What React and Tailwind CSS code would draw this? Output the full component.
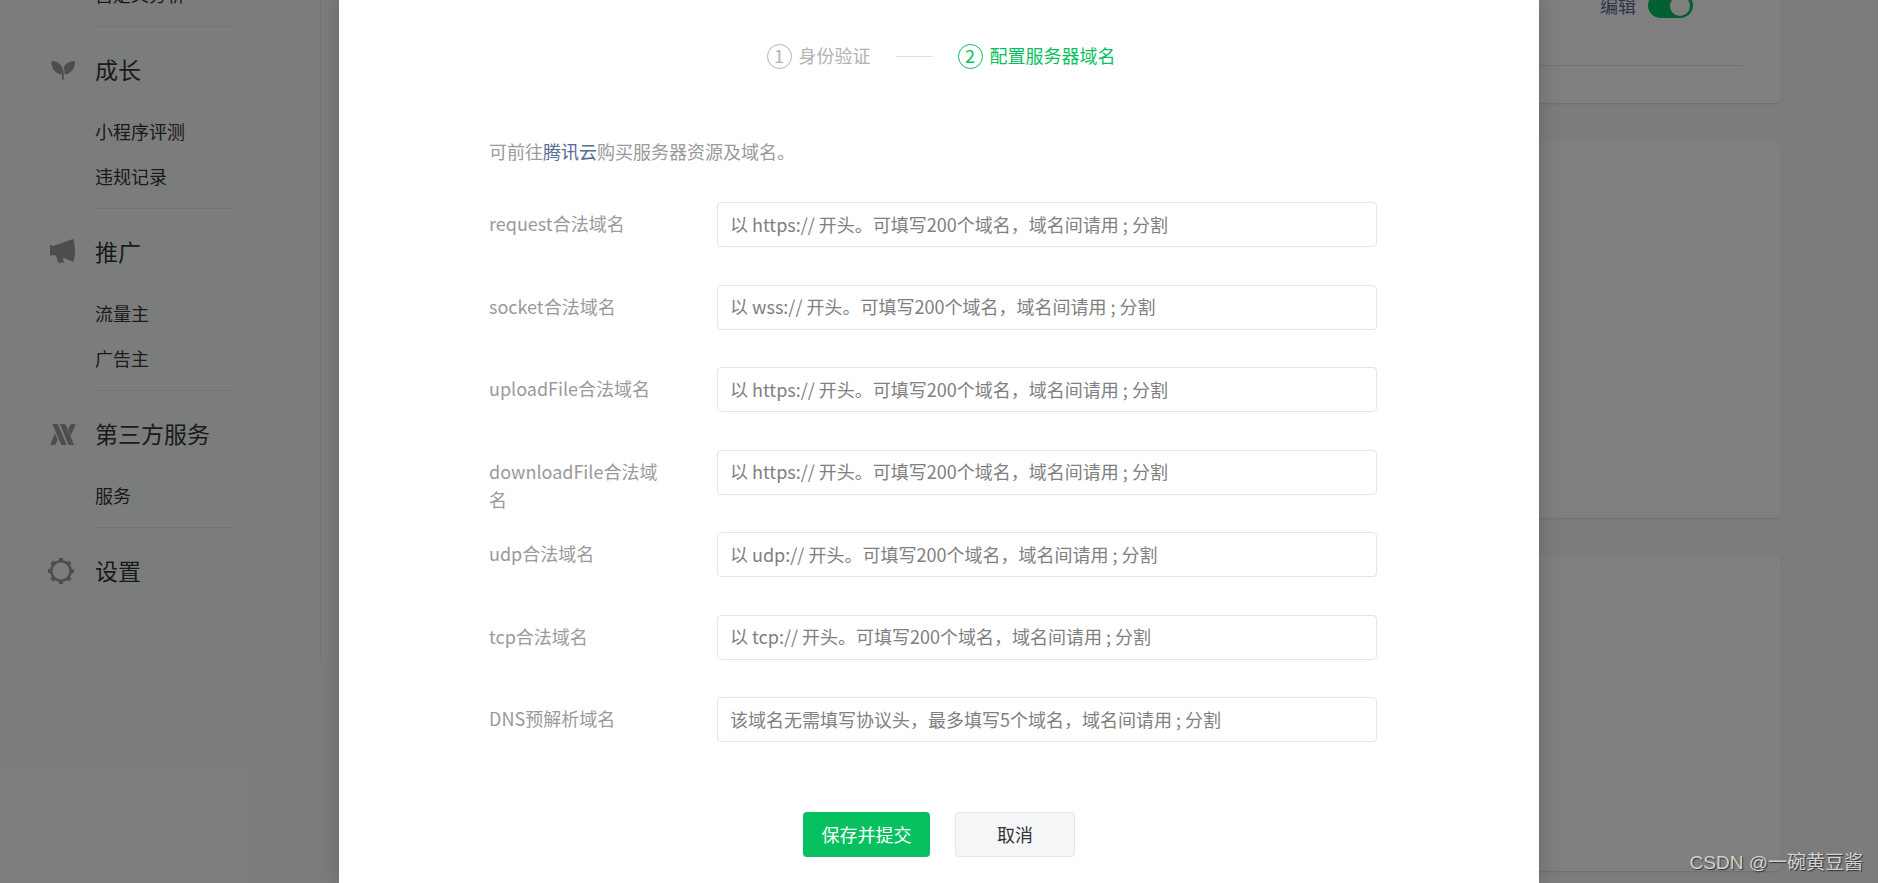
import React from 'react';

const SproutIcon = () => (
  <svg width="28" height="28" viewBox="0 0 28 28" fill="currentColor" aria-hidden="true">
    <path d="M3.3 5C10 5 15.8 9 15.8 18.3V23.8H14V18.3C7.500 18 3.300 13 3.300 5Z" />
    <path d="M27 5C21 5 16.500 8 15.900 11.500L16.800 18.300C23.500 17.800 27 12.500 27 5Z" />
  </svg>
);

const MegaphoneIcon = () => (
  <svg width="28" height="28" viewBox="0 0 28 28" fill="currentColor" aria-hidden="true">
    <path d="M2 7H3.500L4.500 8.200L25.200 1C27.500 8 27.500 17 25.600 24L14.700 19.500L16 24.800H10.300L8 17.700L4.500 16.800L3.500 17.800H2Z" />
  </svg>
);

const ServiceIcon = () => (
  <svg width="28" height="28" viewBox="0 0 28 28" fill="currentColor" aria-hidden="true">
    <path d="M4.300 4H8.500Q9.700 4 10.300 5.200L18.700 25H14.500Q13.300 25 12.700 23.800Z" />
    <path d="M12 4H16.200Q17.400 4 18 5.200L26 25H21.800Q20.600 25 20 23.800Z" />
    <path d="M21.800 5.500Q22.500 4 24 4H27Q27.500 5 26.800 6.500L22.800 15.500L20.200 9.300Z" />
    <path d="M7 13.300L9.600 19.700L8.200 23.300Q7.500 25 6 25H3Q2.300 24.500 3 22.800Z" />
  </svg>
);

const GearIcon = () => (
  <svg width="28" height="28" viewBox="0 0 28 28" fill="none" stroke="currentColor" aria-hidden="true">
    <circle cx="13" cy="14" r="9.700" strokeWidth="2.600" />
    {[0, 45, 90, 135, 180, 225, 270, 315].map((angle) => (
      <path key={angle} d="M13 4V1" strokeWidth="4" transform={`rotate(${angle} 13 14)`} />
    ))}
  </svg>
);

const sections = [
  { title: '成长', icon: SproutIcon, items: ['小程序评测', '违规记录'] },
  { title: '推广', icon: MegaphoneIcon, items: ['流量主', '广告主'] },
  { title: '第三方服务', icon: ServiceIcon, items: ['服务'] },
  { title: '设置', icon: GearIcon, items: [] },
];

const fields = [
  { id: 'request', label: 'request合法域名', placeholder: '以 https:// 开头。可填写200个域名，域名间请用 ; 分割' },
  { id: 'socket', label: 'socket合法域名', placeholder: '以 wss:// 开头。可填写200个域名，域名间请用 ; 分割' },
  { id: 'upload', label: 'uploadFile合法域名', placeholder: '以 https:// 开头。可填写200个域名，域名间请用 ; 分割' },
  { id: 'download', label: 'downloadFile合法域名', placeholder: '以 https:// 开头。可填写200个域名，域名间请用 ; 分割' },
  { id: 'udp', label: 'udp合法域名', placeholder: '以 udp:// 开头。可填写200个域名，域名间请用 ; 分割' },
  { id: 'tcp', label: 'tcp合法域名', placeholder: '以 tcp:// 开头。可填写200个域名，域名间请用 ; 分割' },
  { id: 'dns', label: 'DNS预解析域名', placeholder: '该域名无需填写协议头，最多填写5个域名，域名间请用 ; 分割' },
];

const NavItem = ({ children }) => (
  <a href="#" className="flex h-[45px] items-center pb-[2px] text-[#353535]">{children}</a>
);

const Sidebar = () => (
  <aside className="h-[663px] w-[321px] shrink-0 border-r border-[#e7e7eb]">
    <nav className="-mt-[27px] pr-[87px]">
      <div className="pb-2 pl-[95px]">
        <NavItem>自定义分析</NavItem>
      </div>
      {sections.map(({ title, icon: Icon, items }) => (
        <div key={title} className="pb-2">
          <div className="ml-[95px] border-t border-[#e4e6e5]" />
          <h3 className="mt-[21px] mb-[18px] flex h-11 items-center gap-[19px] pl-12 text-[23px] text-[#353535]">
            <span className="text-[#9a9a9a]"><Icon /></span>
            <span className="pb-[2px]">{title}</span>
          </h3>
          <div className="pl-[95px]">
            {items.map((item) => <NavItem key={item}>{item}</NavItem>)}
          </div>
        </div>
      ))}
    </nav>
  </aside>
);

const Content = () => (
  <main className="mr-[97px] ml-[37px] flex-1">
    <section className="-mt-[7px] rounded-b-md bg-white px-[38px] pb-[37px] shadow-sm">
      <div className="flex items-center justify-end gap-3 border-b border-[#e4e4e4] pr-[50px] pb-[47px]">
        <a href="#" className="leading-[25px] text-[#576b95]">编辑</a>
        <label className="flex h-[25px] w-[45px] cursor-pointer items-center justify-end rounded-full bg-[#07c160] px-[3px]">
          <input type="checkbox" role="switch" aria-label="启用" defaultChecked className="h-5 w-5 appearance-none rounded-full bg-white" />
        </label>
      </div>
    </section>
    <section className="mt-[38px] min-h-[377px] rounded-md bg-white shadow-sm" />
    <section className="mt-[37px] min-h-[316px] rounded-md bg-white shadow-sm" />
  </main>
);

const Step = ({ number, label, active }) => (
  <li className={active ? 'flex items-center gap-[7px] text-[#07c160]' : 'flex items-center gap-[7px] text-[#b2b2b2]'}>
    <span className="flex h-[25px] w-[25px] items-center justify-center rounded-full border border-current pb-[2px]">{number}</span>
    <span className="pb-[2px]">{label}</span>
  </li>
);

const DomainDialog = () => (
  <div
    role="dialog"
    aria-modal="true"
    className="min-h-full w-[1200px] max-w-full bg-white pt-11 pr-[162px] pl-[150px] shadow-[0_0_20px_rgba(0,0,0,0.2)]"
  >
    <ol className="-mr-4 flex h-[25px] items-center justify-center gap-[25px]">
      <Step number="1" label="身份验证" />
      <li aria-hidden="true" className="w-[37px] border-t border-[#e0e0e0]" />
      <Step number="2" label="配置服务器域名" active />
    </ol>

    <form onSubmit={(e) => e.preventDefault()}>
      <p className="mt-[68px] leading-7 text-[#9a9a9a]">
        可前往<a href="#" className="text-[#576b95]">腾讯云</a>购买服务器资源及域名。
      </p>

      <div className="mt-[37px] grid h-[578px] auto-rows-fr">
        {fields.map(({ id, label, placeholder }) => (
          <div key={id} className="flex items-start">
            <label htmlFor={id} className="mr-[53px] w-[175px] shrink-0 pt-[7px] leading-7 text-[#9a9a9a]">{label}</label>
            <input
              id={id}
              type="text"
              placeholder={placeholder}
              className="h-[45px] min-w-0 flex-1 rounded border border-[#e4e5e8] px-3 pb-[2px] text-[#353535] placeholder:text-[#808080]"
            />
          </div>
        ))}
      </div>

      <div className="mt-8 -mr-3 flex items-center justify-center gap-[25px]">
        <button type="submit" className="h-[45px] w-[127px] rounded bg-[#07c160] text-white">保存并提交</button>
        <button type="button" className="h-[45px] w-[120px] rounded border border-[#e4e5e8] bg-[#f5f6f8] text-[#353535]">取消</button>
      </div>
    </form>
  </div>
);

const App = () => (
  <div className="bg-white pr-[2px] font-['Noto_Sans_CJK_SC',sans-serif] text-[18px]">
    <div className="relative flex h-screen items-start overflow-hidden bg-[#f7faf8]">
      <Sidebar />
      <Content />
      <div className="absolute inset-0 flex justify-center bg-black/50">
        <DomainDialog />
      </div>
      <div className="absolute right-[15px] bottom-[5px] font-['Liberation_Sans','Noto_Sans_CJK_SC',sans-serif] text-[19px] leading-[30px] text-[#d2d2d2] [text-shadow:1px_1px_1px_#333]">
        CSDN @一碗黄豆酱
      </div>
    </div>
  </div>
);

export default App;
